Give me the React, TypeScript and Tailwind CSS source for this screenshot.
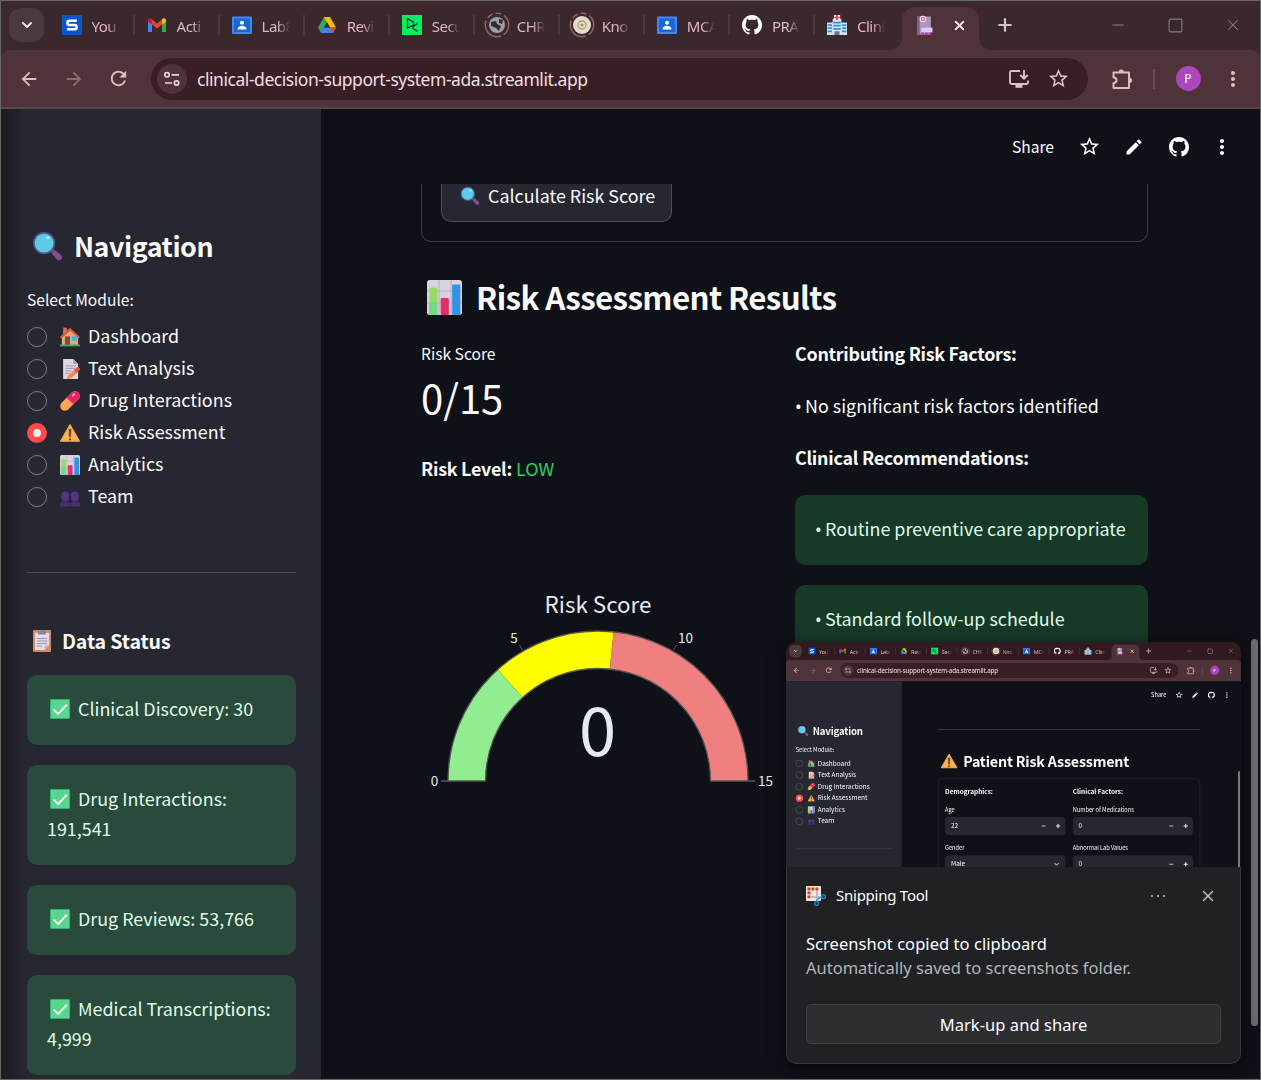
import React from "react";
import {
  MdArrowBack,
  MdArrowForward,
  MdRefresh,
  MdStarBorder,
  MdMoreVert,
  MdEdit,
} from "react-icons/md";
import { BsGithub } from "react-icons/bs";
import { ChevronDown, Minus, Plus, Square, X } from "lucide-react";

type IconProps = { className?: string };

const Magnifier = ({ className = "" }: IconProps) => (
  <svg viewBox="0 0 32 32" className={className}>
    <path d="M19 21.5l3-3 8.2 6.600c2.600 2.200-1.700 7-4.400 4.600z" fill="#83508f" />
    <path d="M18.500 18.500l4 4" stroke="#5b4f86" strokeWidth="3" />
    <circle cx="12.500" cy="12.500" r="11.500" fill="#4c5a96" />
    <circle cx="12.500" cy="12.500" r="9.700" fill="#5fcbe8" />
    <circle cx="16.500" cy="7" r="2" fill="#9be5f6" />
  </svg>
);

const House = ({ className = "" }: IconProps) => (
  <svg viewBox="0 0 32 32" className={className}>
    <rect x="5" y="1" width="6" height="12" fill="#bd7d5b" />
    <path d="M3 15L16 4l13 11v14H3z" fill="#e5aa72" />
    <path d="M0 16L16 1l16 15-2 2.500L16 6 2 18.500z" fill="#e8533b" />
    <rect x="8" y="15" width="8" height="14" fill="#77504e" />
    <rect x="19" y="15" width="8" height="7" fill="#31b6ef" />
    <rect x="0" y="28" width="32" height="3" fill="#3fa96b" />
  </svg>
);

const Memo = ({ className = "" }: IconProps) => (
  <svg viewBox="0 0 32 32" className={className}>
    <path d="M5 0h16l8 8v24H5z" fill="#dcd6e5" />
    <path d="M21 0l8 8h-8z" fill="#a9a2b6" />
    <path d="M9 11h17M9 15h15M9 19h9M9 23h6" stroke="#9d97aa" strokeWidth="1.500" />
    <path d="M12 27l11-10 5 5-11 9-6 1z" fill="#fb8a45" />
    <path d="M22 18l5-5c3-1 6 2 5 4l-5 5z" fill="#f2484f" />
  </svg>
);

const Pill = ({ className = "" }: IconProps) => (
  <svg viewBox="0 0 32 32" className={className}>
    <g transform="rotate(-45 16 16)">
      <rect x="-3" y="8.500" width="38" height="15" rx="7.500" fill="#fba557" />
      <path d="M16 8.500h11.500a7.500 7.500 0 010 15H16z" fill="#e9246b" />
      <ellipse cx="27" cy="13" rx="3" ry="1.800" fill="#f7a0bd" />
    </g>
  </svg>
);

const Warning = ({ className = "" }: IconProps) => (
  <svg viewBox="0 0 32 32" className={className}>
    <path d="M16 3L31 29H1z" fill="#fcb34f" stroke="#f9a94b" strokeWidth="2" strokeLinejoin="round" />
    <path d="M14.500 10h3l-.5 12h-2z" fill="#513b45" stroke="#513b45" />
    <circle cx="16" cy="26" r="1.800" fill="#513b45" />
  </svg>
);

const Chart = ({ className = "" }: IconProps) => (
  <svg viewBox="0 0 32 32" className={className}>
    <rect width="32" height="32" rx="2.500" fill="#d9d2e0" />
    <path d="M0 10h32M0 21h32M11 0v32M22 0v32" stroke="#b9b0c4" strokeWidth="1" />
    <rect x="2" y="7" width="7.500" height="25" rx="1" fill="#94dc62" />
    <rect x="2" y="20" width="7.500" height="12" fill="#6fdc88" />
    <rect x="12.500" y="16.500" width="7.500" height="15.500" rx="1" fill="#e12f6c" />
    <rect x="23" y="4" width="7.500" height="28" rx="1" fill="#3293e4" />
  </svg>
);

const Team = ({ className = "" }: IconProps) => (
  <svg viewBox="0 0 32 32" className={className}>
    <g fill="#533586">
      <rect x="2" y="7" width="12.500" height="16" rx="6" />
      <rect x="17.500" y="7" width="12.500" height="16" rx="6" />
      <path d="M0 31v-4c0-3 3-4 8-4s7 1 7.500 4v4zM16.500 31v-4c0-3 3-4 8-4s7 1 7.500 4v4z" fill="#46306f" />
    </g>
  </svg>
);

const Clipboard = ({ className = "" }: IconProps) => (
  <svg viewBox="0 0 28 34" className={className}>
    <rect x="0" y="0" width="28" height="34" rx="1.500" fill="#d18a5b" />
    <path d="M3 4h22v20l-7 7H3z" fill="#e2dcec" />
    <path d="M25 24l-7 7v-7z" fill="#b9b0c8" />
    <path d="M6 13h16M6 17h16M6 21h16M6 25h8" stroke="#958da4" strokeWidth="1.400" />
    <path d="M8 1h3q3-2 6 0h3v6H8z" fill="#8b8394" />
  </svg>
);

const Check = ({ className = "" }: IconProps) => (
  <svg viewBox="0 0 32 32" className={className}>
    <rect width="32" height="32" rx="2" fill="#36b077" />
    <rect x="1.500" y="1.500" width="29" height="29" rx="2" fill="#58d68f" />
    <path d="M6 17l7 7L27 9" stroke="#fff" strokeWidth="2.800" fill="none" />
  </svg>
);

const Hospital = ({ className = "" }: IconProps) => (
  <svg viewBox="0 0 32 32" className={className}>
    <path d="M0 12h9V6h14v6h9v20H0z" fill="#d4e3ee" />
    <rect x="11" y="0" width="10" height="8" fill="#eee" />
    <path d="M16 0v8M12 4h8" stroke="#e43d52" strokeWidth="2.600" />
    <path d="M1 16h7M1 21h7M1 26h7M24 16h7M24 21h7M24 26h7M10 12h12M10 17h12M10 22h12" stroke="#3096dc" strokeWidth="2.800" />
    <rect x="12" y="26" width="8" height="6" fill="#6e7780" />
  </svg>
);

const Building = ({ className = "" }: IconProps) => (
  <svg viewBox="0 0 32 36" className={className}>
    <rect x="2" y="2" width="26" height="34" fill="#a898bd" />
    <rect x="2" y="2" width="5" height="34" fill="#75638e" />
    <circle cx="13" cy="6.500" r="6" fill="#f9e6f2" />
    <circle cx="13" cy="6.500" r="3" fill="none" stroke="#ea4c8d" strokeWidth="2.200" />
    <rect x="10" y="23" width="21" height="9" fill="#e6caff" />
    <path d="M10 34h21" stroke="#d12ca6" strokeWidth="3.500" strokeDasharray="5 2" />
  </svg>
);

const SLogo = ({ className = "" }: IconProps) => (
  <svg viewBox="0 0 20 20" className={className}>
    <rect width="20" height="20" fill="#0757c8" />
    <path d="M14.800 5.800H7.500a2 2 0 000 4.200h5a2.100 2.100 0 010 4.300H5" stroke="#fff" strokeWidth="2.500" fill="none" />
  </svg>
);

const Gmail = ({ className = "" }: IconProps) => (
  <svg viewBox="0 0 20 20" className={className}>
    <path d="M1 5v12h4V8z" fill="#4285f4" />
    <path d="M19 5v12h-4V8z" fill="#34a853" />
    <path d="M5 4.500l5 4 5-4v5l-5 4-5-4z" fill="#ea4335" />
    <path d="M1 5.500C1 3 3.500 2.500 5 4v5.500L1 6.800z" fill="#c5221f" />
    <path d="M19 5.500C19 3 16.500 2.500 15 4v5.500l4-2.700z" fill="#fbbc04" />
  </svg>
);

const Classroom = ({ className = "" }: IconProps) => (
  <svg viewBox="0 0 20 20" className={className}>
    <rect y="1.500" width="20" height="17.500" rx="1" fill="#4285f4" />
    <rect x="2" y="3.500" width="16" height="13.500" fill="#1967d2" />
    <circle cx="10" cy="7.800" r="2" fill="#fff" />
    <path d="M5.500 14.500c0-5 9-5 9 0z" fill="#fff" />
  </svg>
);

const Drive = ({ className = "" }: IconProps) => (
  <svg viewBox="0 0 20 20" className={className}>
    <path d="M7 2h6l-3 5.500L4 18 1 12.500z" fill="#34a853" />
    <path d="M7 2h6l6 10.500h-6z" fill="#fbbc04" />
    <path d="M4 18l3-5.500h12L16 18z" fill="#4285f4" />
    <path d="M13 12.500h6L16 18z" fill="#ea4335" />
    <path d="M10 7.500l3 5H7z" fill="#3a282c" />
  </svg>
);

const DataCamp = ({ className = "" }: IconProps) => (
  <svg viewBox="0 0 20 20" className={className}>
    <rect width="20" height="20" fill="#03ef62" />
    <path d="M5.500 12V3.500l6 3.500v3L5.500 13zM15.500 8.500l-4.500 3v2l4.500 3" stroke="#05192d" strokeWidth="1.200" fill="none" />
  </svg>
);

const Globe = ({ className = "" }: IconProps) => (
  <svg viewBox="0 0 26 26" className={className}>
    <circle cx="13" cy="13" r="11.700" fill="none" stroke="#94616d" strokeWidth="1.500" strokeDasharray="22 3 6 3 6 3" transform="rotate(95 13 13)" />
    <circle cx="13" cy="13" r="8" fill="#9aa0a6" />
    <path d="M7 10l5-1 1 3 4 2-2 5-3-3-5-2zM15 7l4 1-1 4-3-1z" fill="#3a282c" />
  </svg>
);

const Seal = ({ className = "" }: IconProps) => (
  <svg viewBox="0 0 26 26" className={className}>
    <circle cx="13" cy="13" r="11.700" fill="none" stroke="#94616d" strokeWidth="1.500" strokeDasharray="22 3 6 3 6 3" transform="rotate(95 13 13)" />
    <circle cx="13" cy="13" r="9" fill="#e7dcc8" />
    <circle cx="13" cy="13" r="4" fill="none" stroke="#b39b77" strokeWidth="1.300" />
    <circle cx="13" cy="13" r="1.500" fill="#a88a62" />
  </svg>
);

const Tune = ({ className = "" }: IconProps) => (
  <svg viewBox="0 0 18 18" className={className} fill="none" stroke="#ead6d9" strokeWidth="1.700">
    <circle cx="4" cy="4.800" r="2.200" />
    <path d="M8.500 4.800H16M2 13h7" />
    <circle cx="13.500" cy="13" r="2.200" />
  </svg>
);

const InstallApp = ({ className = "" }: IconProps) => (
  <svg viewBox="0 0 22 20" className={className} fill="none" stroke="currentColor" strokeWidth="1.900">
    <path d="M12 2H3.500Q2 2 2 3.500v10Q2 15 3.500 15h15Q20 15 20 13.500V11.500" />
    <path d="M7.500 17.300h7" strokeWidth="3" />
    <path d="M16 1v8.500M12.300 6l3.700 3.700L19.700 6" />
  </svg>
);

const Puzzle = ({ className = "" }: IconProps) => (
  <svg viewBox="0 0 24 24" className={className} fill="none" stroke="currentColor" strokeWidth="2" strokeLinejoin="round">
    <path d="M3.500 5.500H19V21H3.500v-4.800q3-.6 3-2.950t-3-2.950z" />
    <path d="M8.700 5a2.600 2.600 0 015.200 0zM19.500 10.700a2.600 2.600 0 010 5.200z" fill="currentColor" stroke="none" />
  </svg>
);

const TABS: { label: string; icon: React.ReactNode }[] = [
  { label: "You", icon: <SLogo className="size-5" /> },
  { label: "Acti", icon: <Gmail className="size-5" /> },
  { label: "Lab8", icon: <Classroom className="size-5" /> },
  { label: "Revi", icon: <Drive className="size-5" /> },
  { label: "Secu", icon: <DataCamp className="size-5" /> },
  { label: "CHR", icon: <Globe className="-mx-[3px] size-[26px] shrink-0" /> },
  { label: "Kno", icon: <Seal className="-mx-[3px] size-[26px] shrink-0" /> },
  { label: "MCA", icon: <Classroom className="size-5" /> },
  { label: "PRA", icon: <BsGithub className="size-5 text-white" /> },
  { label: "Clini", icon: <Hospital className="size-5" /> },
];

function BrowserBar({ mini = false }: { mini?: boolean }) {
  return (
    <div className="font-['Noto_Sans',sans-serif]">
      <div className={`flex h-[50px] ${mini ? "bg-[#311a1f]" : "bg-[#3a282c]"}`}>
        <div className="ml-[9px] mt-2 flex h-[34px] w-[35px] shrink-0 items-center justify-center rounded-xl bg-[#493b3c]">
          <ChevronDown className="size-4 text-[#f3e4e6]" strokeWidth={3} />
        </div>
        <div className="flex shrink-0 pl-[7.500px]">
          {TABS.map((t, i) => (
            <div key={i} className="flex w-[85.050px] shrink-0 items-center pl-[10px]">
              <span className="flex w-5 shrink-0 justify-center">{t.icon}</span>
              <span className="ml-[10px] mt-[2px] w-[28px] whitespace-nowrap text-[15px] tracking-[-0.5px] text-[#e0b6be] [mask-image:linear-gradient(to_right,black_55%,transparent)]">
                {t.label}
              </span>
              {i < 9 && <span className="ml-[13px] h-5 w-[2px] bg-[#4c393d]" />}
            </div>
          ))}
        </div>
        <div className="relative mt-[7px] flex h-[43px] w-[77px] shrink-0 items-center rounded-t-[13px] bg-[#503338]">
          <svg viewBox="0 0 14 14" className="absolute -left-[14px] bottom-0 size-[14px]"><path d="M14 0v14H0Q14 14 14 0z" fill="#503338" /></svg>
          <svg viewBox="0 0 14 14" className="absolute -right-[14px] bottom-0 size-[14px]"><path d="M0 0v14h14Q0 14 0 0z" fill="#503338" /></svg>
          <Building className="mb-[7px] ml-[14px] h-5 w-[17px]" />
          <X className="mb-[6px] ml-[19px] size-[15px] text-[#f6e3e6]" strokeWidth={3.200} />
        </div>
        <Plus className="ml-[16px] mt-[15px] size-5 text-[#d5c4c7]" strokeWidth={2.600} />
        <div className={`ml-auto mr-[19px] flex items-center gap-[40px] ${mini ? "text-[#d0c0c3]" : "text-[#8b7b7e]"}`}>
          <Minus className="size-[18px]" strokeWidth={1.500} />
          <Square className="size-[17px]" strokeWidth={1.500} />
          <X className="size-[18px]" strokeWidth={1.400} />
        </div>
      </div>
      <div className={mini ? "bg-[#311a1f]" : "bg-[#3a282c]"}>
        <div className="flex h-[59px] items-center rounded-t-[10px] border-b-2 border-[#55474a] bg-[#503338]">
          <MdArrowBack className="ml-[17.500px] size-[22px] text-[#e4bac1]" />
          <MdArrowForward className="ml-[23px] size-[22px] text-[#8d6a70]" />
          <MdRefresh className="ml-[22px] size-[23px] text-[#e4bac1]" />
          <div className="ml-[21.500px] flex h-[42px] w-[937px] items-center rounded-full bg-[#381f25]">
            <span className="ml-[6px] flex size-[30px] items-center justify-center rounded-full bg-[#503338]">
              <Tune className="size-[18px]" />
            </span>
            <span className="ml-[10px] mt-[2px] whitespace-nowrap text-[17.500px] tracking-[-0.45px] text-[#f2dfe2]">
              clinical-decision-support-system-ada.streamlit.app
            </span>
            <InstallApp className="ml-auto h-5 w-[22px] text-[#d9c3c7]" />
            <MdStarBorder className="ml-[17px] mr-[18px] size-[23px] text-[#d9c3c7]" />
          </div>
          <Puzzle className="ml-[22px] size-[24px] text-[#e4bac1]" />
          <span className="ml-[19px] h-5 w-[2px] bg-[#6f4c53]" />
          <span className="ml-[20.500px] flex size-[25px] items-center justify-center rounded-full bg-[#ab47bc] text-[12px] text-white">P</span>
          <MdMoreVert className="ml-[20.500px] size-6 text-[#e4bac1]" />
        </div>
      </div>
    </div>
  );
}

const NAV = [
  { label: "Dashboard", Icon: House },
  { label: "Text Analysis", Icon: Memo },
  { label: "Drug Interactions", Icon: Pill },
  { label: "Risk Assessment", Icon: Warning },
  { label: "Analytics", Icon: Chart },
  { label: "Team", Icon: Team },
];

const STATUS = ["Clinical Discovery: 30", "Drug Interactions: 191,541", "Drug Reviews: 53,766", "Medical Transcriptions: 4,999"];

function DataStatus() {
  return (
    <>
      <h3 className="mt-[53px] flex h-[30px] shrink-0 items-center text-[19.600px] font-bold leading-[30px] tracking-[-0.150px]">
        <Clipboard className="ml-[6px] mr-[11px] h-[22px] w-[18px]" />
        Data Status
      </h3>
      <div className="mt-[19px] flex flex-col gap-5">
        {STATUS.map((s) => (
          <div key={s} className="rounded-[10px] bg-[#2a4a3b] px-5 pb-[22px] pt-[18px] text-[17.900px] leading-[30px] text-[#dffde9]">
            <Check className="ml-[3px] mr-2 inline size-5 align-[-3px]" />
            {s}
          </div>
        ))}
      </div>
    </>
  );
}

function Sidebar({ mini = false }: { mini?: boolean }) {
  return (
    <aside
      className={`flex w-[321px] shrink-0 flex-col overflow-hidden bg-[#262730] pl-[27px] pr-[25px] pt-[117px] ${
        mini ? "h-[515px]" : "h-[971px] bg-linear-to-r from-[#1b1c20] to-[#262730] to-[26px]"
      }`}
    >
      <h2 className="flex h-10 items-center text-[26.800px] font-bold leading-10 tracking-[-0.450px]">
        <Magnifier className="ml-[5px] mr-[11px] size-[31px]" />
        Navigation
      </h2>
      <p className="mt-[21px] h-6 text-[15.600px] leading-6">Select Module:</p>
      <div className="mt-[10px]">
        {NAV.map(({ label, Icon }) => (
          <div key={label} className="flex h-8 items-center text-[17.900px]">
            {label === "Risk Assessment" ? (
              <span className="flex size-5 items-center justify-center rounded-full bg-[#ff4b4b]">
                <span className="size-[7.500px] rounded-full bg-[#ececec]" />
              </span>
            ) : (
              <span className="size-5 rounded-full border border-[#7b7c84]" />
            )}
            <Icon className="mb-px ml-[13px] mr-2 size-5" />
            <span className="pb-[3px] leading-[29px]">{label}</span>
          </div>
        ))}
      </div>
      <div className={`mt-[59px] shrink-0 ${mini ? "h-[2px] bg-[#3c3d46]" : "h-px bg-[#4b4c55]"}`} />
      {!mini && <DataStatus />}
    </aside>
  );
}

function AppHeader() {
  return (
    <header className="flex h-[75px] shrink-0 items-center pr-[27.500px] text-white">
      <span className="ml-auto text-[15.600px]">Share</span>
      <MdStarBorder className="ml-[24px] size-[23px]" />
      <MdEdit className="ml-[23px] size-[20px]" />
      <BsGithub className="ml-[25px] size-[20px]" />
      <MdMoreVert className="ml-[20.500px] size-[24px]" />
    </header>
  );
}

function Gauge() {
  const point = (r: number, deg: number) => {
    const a = (deg * Math.PI) / 180;
    return `${(177 - r * Math.cos(a)).toFixed(2)} ${(196 - r * Math.sin(a)).toFixed(2)}`;
  };
  const band = (a: number, b: number) =>
    `M${point(150, a)}A150 150 0 0 1 ${point(150, b)}L${point(112.5, b)}A112.5 112.5 0 0 0 ${point(112.5, a)}Z`;
  return (
    <svg width="354" height="220" viewBox="0 0 354 220" className="font-['Noto_Sans_CJK_SC',sans-serif]" fill="#e6eaf1" textAnchor="middle">
      <text x="177" y="28" fontSize="22.400">Risk Score</text>
      <path d={band(0, 48)} fill="#90ee90" />
      <path d={band(48, 96)} fill="#ffff00" />
      <path d={band(96, 180)} fill="#f08080" />
      <path d={band(0, 180)} fill="none" stroke="#55554f" strokeWidth="1.300" />
      <path d="M20 196h7M327 196h7" stroke="#55555a" strokeWidth="1.500" />
      <path d={`M${point(151, 60)}L${point(157, 60)}M${point(151, 120)}L${point(157, 120)}`} stroke="#55555a" />
      <g fontSize="13.500">
        <text x="13.500" y="201">0</text>
        <text x="93" y="58">5</text>
        <text x="264.500" y="58">10</text>
        <text x="344.500" y="201">15</text>
      </g>
      <text x="176.500" y="171" fontSize="67">0</text>
    </svg>
  );
}

const Bullet = () => <span className="inline-block w-[10px] font-['Noto_Sans',sans-serif] leading-none">•</span>;

function Results() {
  return (
    <div className="h-[896px] overflow-hidden pl-[100px]">
      <div className="h-[58px] w-[727px] rounded-b-[10px] border border-t-0 border-[#3a3c42] pl-[19px]">
        <div className="flex h-[38px] w-[231px] items-start rounded-b-[10px] border border-t-0 border-[#4d4f57] bg-[#262730] pl-[18px] text-[17.900px] leading-[23px]">
          <Magnifier className="mr-2 mt-[2px] size-5" />
          Calculate Risk Score
        </div>
      </div>
      <h1 className="mt-[30px] flex h-[50px] items-center text-[31.300px] font-bold leading-[50px] tracking-[-0.620px]">
        <Chart className="ml-[6px] mr-[14px] size-[35px]" />
        Risk Assessment Results
      </h1>
      <div className="mt-[16px] flex gap-5">
        <section className="w-[354px]">
          <p className="h-[30px] text-[15.600px] leading-[30px]">Risk Score</p>
          <p className="h-[60px] text-[40px] leading-[59px]">0/15</p>
          <p className="mt-[25px] h-[30px] text-[17.900px] leading-[30px]">
            <b className="tracking-[-0.250px]">Risk Level:</b> <span className="text-[#2bd05f]">LOW</span>
          </p>
          <div className="mt-[102px]">
            <Gauge />
          </div>
        </section>
        <section className="w-[353px] text-[17.900px] leading-[30px]">
          <p className="font-bold tracking-[-0.280px]">Contributing Risk Factors:</p>
          <p className="mt-[22px] whitespace-nowrap"><Bullet />No significant risk factors identified</p>
          <p className="mt-[22px] font-bold tracking-[-0.250px]">Clinical Recommendations:</p>
          <div className="mt-[23px] whitespace-nowrap rounded-[10px] bg-[#173928] px-5 pb-[22px] pt-[18px] text-[#dffde9]"><Bullet />Routine preventive care appropriate</div>
          <div className="mt-5 whitespace-nowrap rounded-[10px] bg-[#173928] px-5 pb-[22px] pt-[18px] text-[#dffde9]"><Bullet />Standard follow-up schedule</div>
        </section>
      </div>
    </div>
  );
}

function Field({ label, value, select = false }: { label: string; value: string; select?: boolean }) {
  return (
    <div className="mb-[22px]">
      <p className="h-[34px] text-[15.600px] leading-[26px]">{label}</p>
      <div className="flex h-[50px] items-center rounded-[10px] bg-[#262730] pl-4 text-[17.900px] leading-[46px]">
        <span className="pb-1">{value}</span>
        {select ? (
          <ChevronDown className="ml-auto mr-[14px] size-5" strokeWidth={3} />
        ) : (
          <>
            <Minus className="ml-auto mr-[24px] size-4" strokeWidth={3} />
            <Plus className="mr-[12px] size-4" strokeWidth={4} />
          </>
        )}
      </div>
    </div>
  );
}

function PatientForm() {
  return (
    <div className="h-[440px] overflow-hidden pl-[100px]">
      <div className="mt-[57px] h-[3px] w-[727px] bg-[#36383e]" />
      <h1 className="mt-[61px] flex h-[50px] items-center text-[39.500px] font-bold leading-[50px] tracking-[-0.500px]">
        <Warning className="ml-2 mr-[16px] size-[46px]" />
        Patient Risk Assessment
      </h1>
      <div className="mt-[23px] flex h-[600px] w-[727px] gap-[21px] rounded-[10px] border-2 border-[#24262c] px-[18px] pt-[17px]">
        <div className="w-[333px]">
          <p className="mb-[24px] h-[30px] text-[17.900px] font-bold leading-[30px]">Demographics:</p>
          <Field label="Age" value="22" />
          <Field label="Gender" value="Male" select />
        </div>
        <div className="w-[333px]">
          <p className="mb-[24px] h-[30px] text-[17.900px] font-bold leading-[30px]">Clinical Factors:</p>
          <Field label="Number of Medications" value="0" />
          <Field label="Abnormal Lab Values" value="0" />
        </div>
      </div>
    </div>
  );
}

function BrowserWindow({ mini = false, children }: { mini?: boolean; children: React.ReactNode }) {
  return (
    <div
      className={`w-[1261px] overflow-hidden bg-[#0e1117] font-['Noto_Sans_CJK_SC',sans-serif] text-[#fafafa] ${
        mini ? "h-[624px]" : "h-[1080px]"
      }`}
    >
      <BrowserBar mini={mini} />
      <div className="flex">
        <Sidebar mini={mini} />
        <main className="w-[940px]">
          <AppHeader />
          {children}
        </main>
      </div>
    </div>
  );
}

const SnipIcon = () => (
  <svg viewBox="0 0 20 20" className="size-5">
    <rect width="15" height="15" rx="1" fill="#e9e9e9" />
    <path d="M1.500 3h11M3 1.500v11" stroke="#d8400f" strokeWidth="3" strokeDasharray="2.800 1.200" />
    <path d="M11 5v8M5 11h9" stroke="#a9adb1" strokeWidth="1.500" />
    <path d="M12 13l3-2M11 13l0 2" stroke="#1d92d8" strokeWidth="1.500" />
    <circle cx="17.500" cy="10.500" r="1.900" fill="none" stroke="#1d92d8" strokeWidth="1.300" />
    <circle cx="10.500" cy="17.500" r="1.900" fill="none" stroke="#1d92d8" strokeWidth="1.300" />
  </svg>
);

function Toast() {
  return (
    <div className="absolute left-[786px] top-[642px] h-[422px] w-[455px] overflow-hidden rounded-[10px] bg-[#202124] font-['Noto_Sans',sans-serif] shadow-[0_4px_18px_rgba(0,0,0,0.6)]">
      <div className="relative h-[225px] overflow-hidden">
        <div className="h-[624px] w-[1261px] origin-top-left scale-[0.3608]">
          <BrowserWindow mini>
            <PatientForm />
          </BrowserWindow>
        </div>
        <div className="absolute bottom-0 right-[1px] h-[96px] w-[2px] rounded-t bg-[#77787c]" />
      </div>
      <div className="h-[197px] rounded-b-[10px] border border-t-0 border-[#37383b] px-[19px] pt-[18px] text-white">
        <div className="flex h-[22px] items-center text-[15px] tracking-[-0.25px]">
          <SnipIcon />
          <span className="mb-[2px] ml-[10px]">Snipping Tool</span>
          <span className="ml-auto flex gap-[4px]">
            <i className="size-[2px] rounded-full bg-[#c5c5c5]" />
            <i className="size-[2px] rounded-full bg-[#c5c5c5]" />
            <i className="size-[2px] rounded-full bg-[#c5c5c5]" />
          </span>
          <X className="ml-[34px] mr-[4px] size-[18px] text-[#d0d0d0]" strokeWidth={1.600} />
        </div>
        <p className="mt-[25px] h-6 text-[16.500px] leading-6 tracking-[0.05px]">Screenshot copied to clipboard</p>
        <p className="h-6 text-[16.500px] leading-6 text-[#b4b5b7]">Automatically saved to screenshots folder.</p>
        <div className="mt-[24px] flex h-10 items-center justify-center rounded-[5px] border border-[#3f4042] bg-[#2d2e31] pt-[2px] text-[16.500px] tracking-[0.05px]">
          Mark-up and share
        </div>
      </div>
    </div>
  );
}

export default function App() {
  return (
    <div className="relative h-[1080px] w-[1261px] overflow-hidden">
      <BrowserWindow>
        <Results />
      </BrowserWindow>
      <div className="absolute left-[1251px] top-[639px] h-[387px] w-[7px] rounded bg-[#6b6b70]" />
      <Toast />
      <div className="pointer-events-none absolute inset-0 border border-[#666864]" />
    </div>
  );
}
